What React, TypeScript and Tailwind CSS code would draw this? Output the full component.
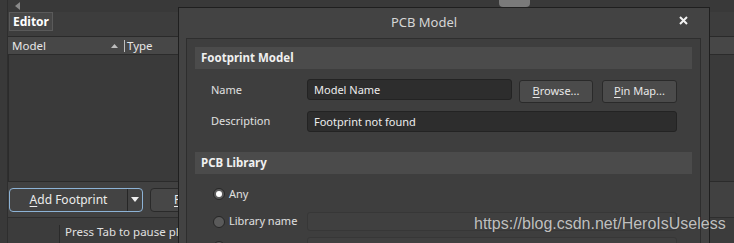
const font = "font-['Noto_Sans','Open_Sans',sans-serif]"

const Btn = ({ u, rest, w }: { u: string; rest: string; w: string }) => (
  <div
    className={`${w} h-[23px] flex items-center justify-center rounded-[3px] border border-[#2a2a2a] bg-[#4b4b4b] text-[11px] text-[#e8e8e8]`}
  >
    <span className="underline underline-offset-2">{u}</span>
    {rest}
  </div>
)

const Radio = ({ on }: { on?: boolean }) => (
  <div className="w-[12px] h-[12px] shrink-0 rounded-full border-[1.5px] border-[#262626] bg-[#5a5a5a] flex items-center justify-center">
    {on && <div className="w-[6px] h-[6px] rounded-full bg-white" />}
  </div>
)

const Section = ({ title }: { title: string }) => (
  <div className="h-[22px] bg-[#4b4b4b] flex items-center pl-[6px] text-[11.5px] font-bold text-[#f0f0f0]">
    {title}
  </div>
)

const PcbModelDialog = () => {
  return (
    <div className="absolute left-[178px] top-[7px] w-[532px] h-[260px] bg-[#434343] border border-[#1f1f1f] flex flex-col">
      <div className="h-[30px] relative flex items-center justify-center pr-[40px]">
        <span className="text-[13px] text-[#d6d6d6]">PCB Model</span>
        <svg className="absolute right-[21px] top-[8px]" width="9" height="9" viewBox="0 0 9 9">
          <path d="M1 1 L8 8 M8 1 L1 8" stroke="#f2f2f2" strokeWidth="2" />
        </svg>
      </div>
      <div className="ml-[7px] mr-[8px] flex-1 bg-[#3e3e3e] border border-[#2e2e2e] pt-[8px] px-[8px]">
        <Section title="Footprint Model" />
        <div className="flex items-start mt-[10px]">
          <div className="w-[112px] pl-[16px] text-[11px] text-[#e0e0e0] leading-[21px]">Name</div>
          <div className="w-[205px] h-[21px] rounded-[3px] border border-[#232323] bg-[#2d2d2d] pl-[6px] text-[11px] text-[#ececec] leading-[19px]">
            Model Name
          </div>
          <div className="ml-[7px] mt-[1px]">
            <Btn u="B" rest="rowse..." w="w-[74px]" />
          </div>
          <div className="ml-[9px] mt-[1px]">
            <Btn u="P" rest="in Map..." w="w-[75px]" />
          </div>
        </div>
        <div className="flex items-center mt-[8px]">
          <div className="w-[112px] pl-[16px] text-[11px] text-[#e0e0e0]">Description</div>
          <div className="w-[370px] h-[21px] rounded-[3px] border border-[#232323] bg-[#2d2d2d] pl-[6px] text-[11px] text-[#ececec] leading-[19px]">
            Footprint not found
          </div>
        </div>
        <div className="mt-[20px]">
          <Section title="PCB Library" />
        </div>
        <div className="flex items-center mt-[13px] pl-[18px] gap-[4px] h-[14px]">
          <Radio on />
          <span className="text-[11px] text-[#e0e0e0]">Any</span>
        </div>
        <div className="flex items-center mt-[11px] h-[19px]">
          <div className="w-[112px] pl-[18px] flex items-center gap-[4px]">
            <Radio />
            <span className="text-[11px] text-[#e0e0e0]">Library name</span>
          </div>
          <div className="w-[370px] h-[19px] rounded-[3px] border border-[#373737] bg-[#404040]" />
        </div>
        <div className="flex items-center mt-[6px] h-[19px]">
          <div className="w-[112px] pl-[18px] flex items-center">
            <Radio />
          </div>
          <div className="w-[370px] h-[19px] rounded-[3px] border border-[#373737] bg-[#404040]" />
        </div>
      </div>
    </div>
  )
}

export default function App() {
  return (
    <div className={`${font} w-[734px] h-[243px] relative overflow-hidden bg-[#3f3f3f] flex`}>
      <div className="w-[8px] h-full bg-[#393939] border-r border-[#2e2e2e]" />
      <div className="flex-1 flex flex-col">
        <div className="h-[12px] bg-[#393939] relative flex items-center pl-[7px]">
          <svg width="5" height="8" viewBox="0 0 5 8">
            <path d="M5 0 L0 4 L5 8 Z" fill="#8a8a8a" />
          </svg>
          <div className="ml-[479px] w-[31px] h-[7px] self-start rounded-b-[4px] bg-[#7a7a7a]" />
        </div>
        <div className="h-[25px] bg-[#3d3d3d] border-b border-[#2a2a2a] flex items-start pl-[1px]">
          <div className="h-[19px] w-[44px] flex items-center justify-center bg-[#474747] border border-[#5a5a5a] text-[12px] font-bold text-white">
            Editor
          </div>
        </div>
        <div className="h-[18px] bg-[#474747] border-b border-[#2b2b2b] flex items-center text-[11.5px] text-[#e6e6e6]">
          <div className="w-[116px] pl-[4px] flex items-center justify-between pr-[6px]">
            <span>Model</span>
            <svg width="7" height="4" viewBox="0 0 7 4">
              <path d="M0 4 L3.5 0 L7 4 Z" fill="#bdbdbd" />
            </svg>
          </div>
          <div className="w-px h-[12px] bg-[#bdbdbd]" />
          <span className="pl-[2px]">Type</span>
        </div>
        <div className="h-[127px] bg-[#3a3a3a] border-l border-b border-[#2b2b2b]" />
        <div className="h-[35px] bg-[#414141] flex items-center pl-[1px] gap-[7px]">
          <div className="w-[134px] h-[24px] rounded-[4px] border border-[#8db3d6] bg-[#434343] flex items-center">
            <div className="flex-1 text-center text-[12px] text-[#ececec]">
              <span className="underline underline-offset-2">A</span>dd Footprint
            </div>
            <div className="w-px h-[22px] bg-[#262626]" />
            <div className="w-[14px] flex justify-center">
              <svg width="8" height="5" viewBox="0 0 8 5">
                <path d="M0 0 L8 0 L4 5 Z" fill="#f0f0f0" />
              </svg>
            </div>
          </div>
          <div className="w-[110px] h-[24px] rounded-[4px] border border-[#2a2a2a] bg-[#474747] flex items-center pl-[23px] text-[12px] text-[#ececec]">
            <span className="underline underline-offset-2">P</span>in
          </div>
        </div>
        <div className="flex-1 bg-[#3c3c3c] border-t border-[#2e2e2e] flex items-end">
          <div className="ml-[51px] w-px h-[18px] bg-[#2a2a2a]" />
          <span className="pl-[5px] pb-[3px] text-[11.5px] text-[#e0e0e0]">Press Tab to pause placement</span>
        </div>
      </div>
      <PcbModelDialog />
      <div className="absolute left-[474px] top-[212px] font-['Liberation_Sans',Arial,sans-serif] text-[16px] text-[#d2d2d2]/90 [text-shadow:0_0_1px_#333]">
        https://blog.csdn.net/HeroIsUseless
      </div>
    </div>
  )
}
